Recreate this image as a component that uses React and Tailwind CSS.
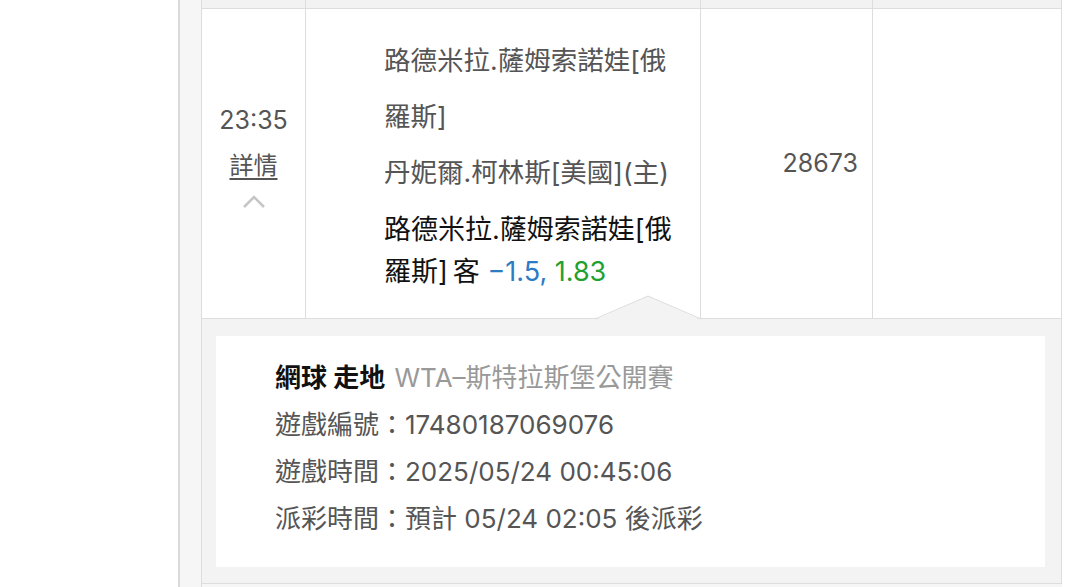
import React from 'react';

const FONT = "font-['Inter','Noto_Sans_CJK_TC',sans-serif]";

const ChevronUp = () => (
    <svg width="26" height="15" viewBox="0 0 26 15" className="mt-[11px]">
        <polyline points="3,13 13,3 23,13" fill="none" stroke="#c6c6c6" strokeWidth="2.6" />
    </svg>
);

const DetailArrow = () => (
    <svg width="106" height="25" viewBox="0 0 106 25" className="absolute left-[393px] top-[-24px]">
        <polygon points="0,25 53,1 106,25" fill="#f3f3f3" />
        <polyline points="0,24 53,1 106,24" fill="none" stroke="#dcdcdc" strokeWidth="1" />
    </svg>
);

const App = () => {
    return (
        <div lang="zh-Hant-TW" className={`w-[1080px] h-[587px] overflow-hidden bg-white ${FONT}`}>
            <div className="ml-[178px] w-[884px] h-full border-l-2 border-[#d9d9d9] bg-[#f6f6f6] pl-[21px]">
                <div className="w-[861px] h-full border-l border-[#dddddd]">
                    {/* previous row tail */}
                    <div className="grid grid-cols-[104px_395px_172px_189px] h-[9px] border-b border-[#dddddd] bg-[#f2f2f2]">
                        <div className="border-r border-[#dddddd]"></div>
                        <div className="border-r border-[#dddddd]"></div>
                        <div className="border-r border-[#dddddd]"></div>
                        <div className="border-r border-[#dddddd]"></div>
                    </div>

                    {/* bet row */}
                    <div className="grid grid-cols-[104px_395px_172px_189px] h-[310px] border-b border-[#dddddd] bg-white">
                        <div className="flex flex-col items-center pt-[94px] border-r border-[#dddddd] text-[#555]">
                            <div className="text-[25px] leading-[34px]">23:35</div>
                            <div className="mt-[12px] text-[24px] leading-[34px] underline underline-offset-4">詳情</div>
                            <ChevronUp />
                        </div>
                        <div className="pl-[78px] pt-[23px] border-r border-[#dddddd]">
                            <div className="w-[294px] text-[26.5px] leading-[56px] text-[#555]">
                                <div>路德米拉.薩姆索諾娃[俄羅斯]</div>
                                <div>丹妮爾.柯林斯[美國](主)</div>
                            </div>
                            <div className="w-[294px] mt-[9px] text-[27px] leading-[42px] text-[#111]">
                                路德米拉.薩姆索諾娃[俄羅斯]<span className="ml-[5px]">客</span>{' '}
                                <span className="text-[#2b7cc4]">−1.5,</span>{' '}
                                <span className="text-[#22a030]">1.83</span>
                            </div>
                        </div>
                        <div className="flex items-center justify-end pr-[14px] border-r border-[#dddddd] text-[25px] text-[#555]">
                            28673
                        </div>
                        <div className="border-r border-[#dddddd]"></div>
                    </div>

                    {/* detail panel */}
                    <div className="relative bg-[#f3f3f3] pl-[14px] pr-[16px] pt-[17px] pb-[16px] border-b border-r border-[#dddddd]">
                        <DetailArrow />
                        <div className="h-[231px] bg-white pl-[59px] pt-[18px] text-[26px] leading-[47px] text-[#555]">
                            <div>
                                <span className="font-bold text-[#111]">網球 走地</span>{' '}
                                <span className="ml-[2px] text-[#999]">WTA–斯特拉斯堡公開賽</span>
                            </div>
                            <div>遊戲編號：17480187069076</div>
                            <div>遊戲時間：2025/05/24 00:45:06</div>
                            <div>派彩時間：預計 05/24 02:05 後派彩</div>
                        </div>
                    </div>
                </div>
            </div>
        </div>
    );
};

export default App;
